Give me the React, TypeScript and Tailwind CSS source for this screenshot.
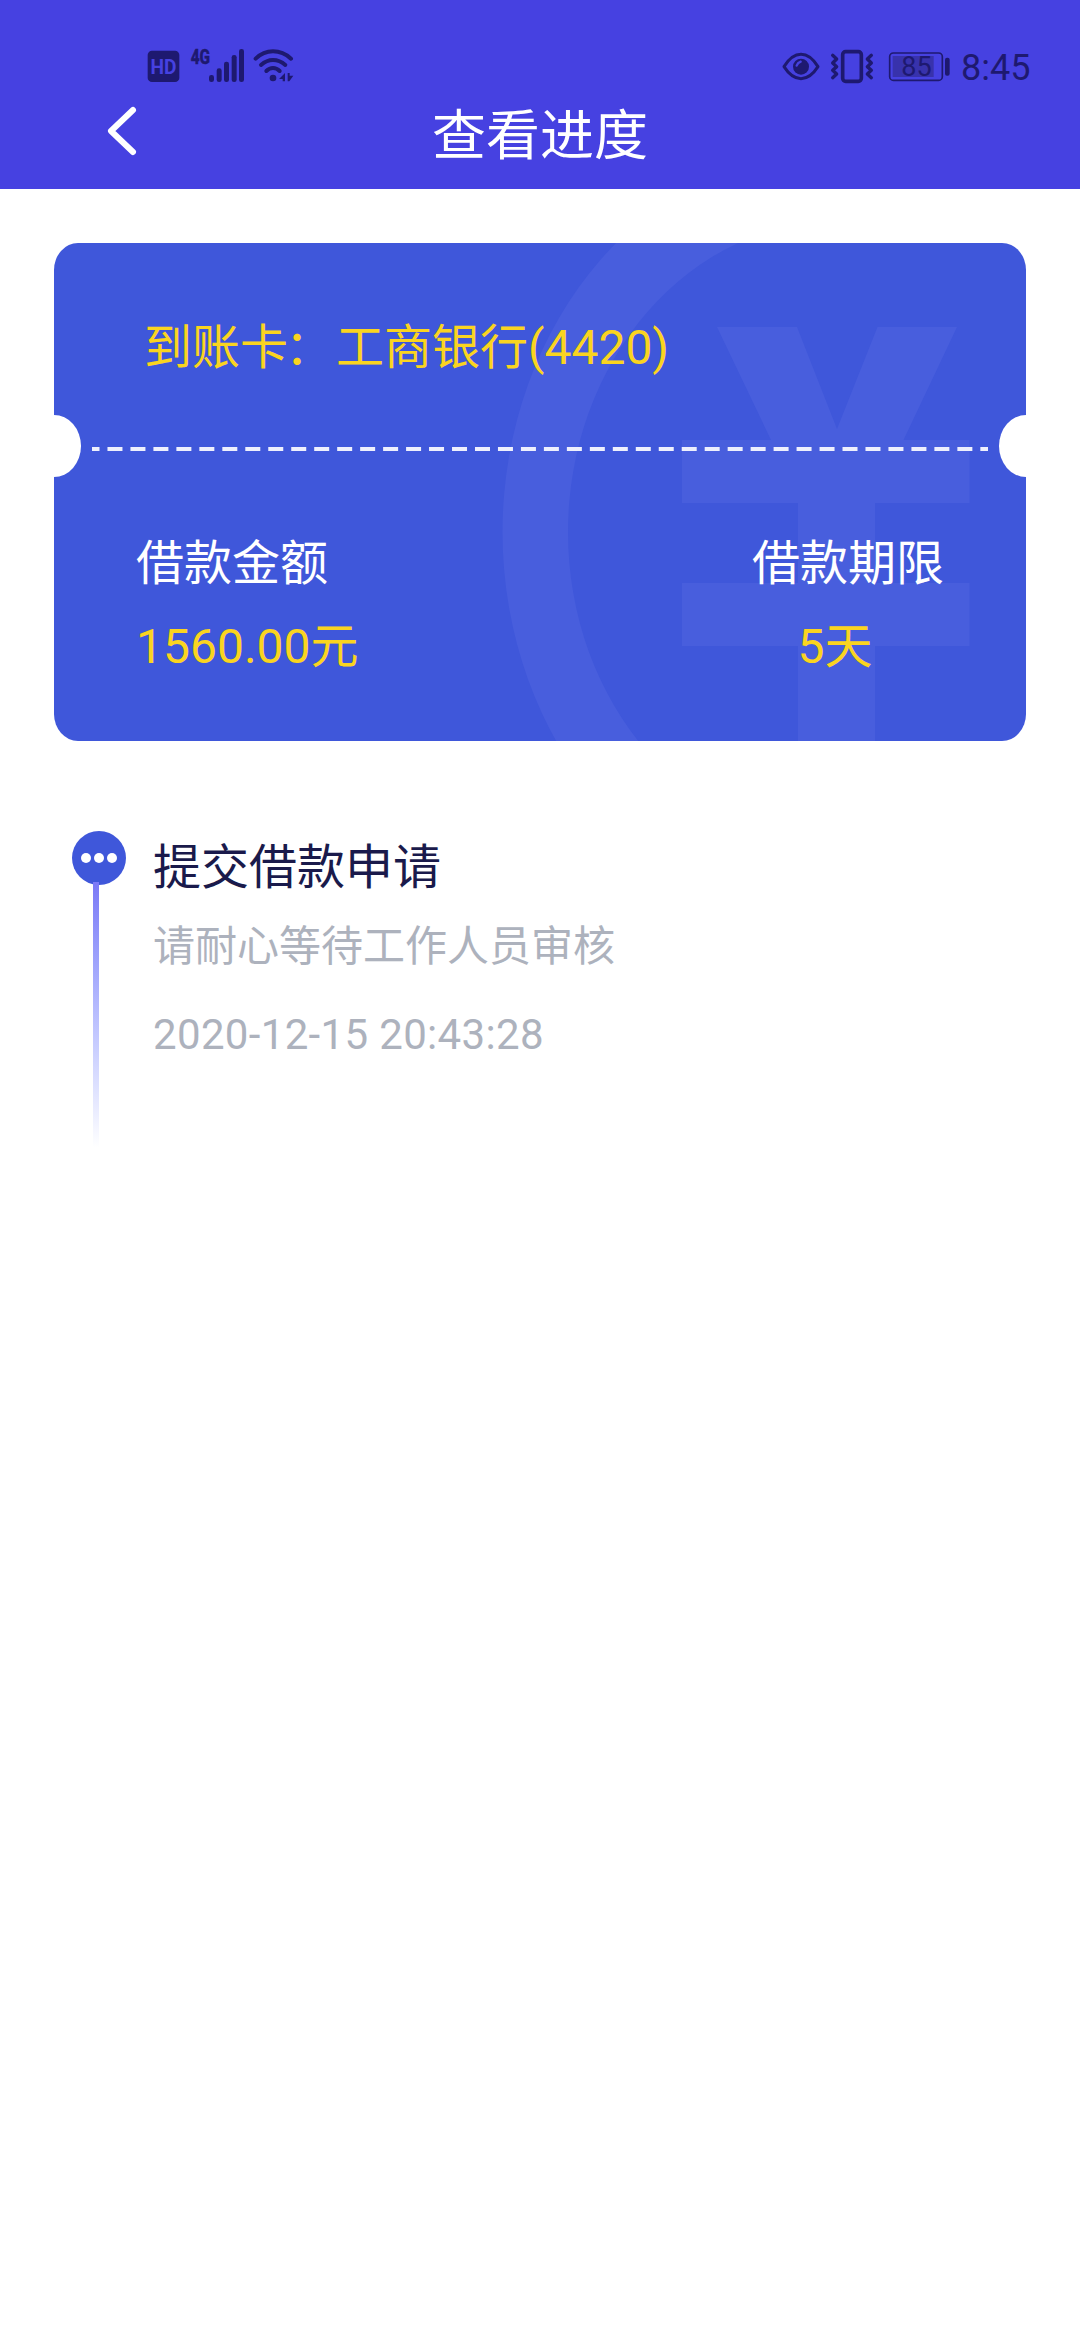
const loan = {
  bank: "工商银行(4420)",
  amount: "1560.00元",
  term: "5天",
};

const steps = [
  {
    title: "提交借款申请",
    desc: "请耐心等待工作人员审核",
    time: "2020-12-15 20:43:28",
  },
];

function SignalIcons() {
  return (
    <svg width="180" height="60" viewBox="0 0 540 180" fill="#1e1970">
      <rect x="53" y="47" width="95" height="94" rx="13" />
      <text x="100.5" y="116" textAnchor="middle" fontSize="58" fontWeight="700" fill="#4641e1" textLength="78" lengthAdjust="spacingAndGlyphs">HD</text>
      <text x="182" y="86" fontSize="61" fontWeight="800" textLength="58" lengthAdjust="spacingAndGlyphs" stroke="#1e1970" strokeWidth="1.5">4G</text>
      <rect x="237" y="120" width="15" height="21" rx="7" />
      <rect x="260" y="100" width="15" height="41" rx="7" />
      <rect x="282" y="80" width="15" height="61" rx="7" />
      <rect x="305" y="60" width="15" height="81" rx="7" />
      <rect x="327" y="42" width="15" height="99" rx="7" />
      <g fill="none" stroke="#1e1970" strokeWidth="12" strokeLinecap="round">
        <path d="M377 71Q400 49 429 49Q459 49 483 71" />
        <path d="M393 90Q410 75 429 75Q449 75 466 90" />
        <path d="M409 108Q418 99 429 99Q440 99 449 108" />
      </g>
      <circle cx="429" cy="129" r="10" />
      <path d="M465 114V139H458V132H447ZM473 114V139H478L490 122H479V114Z" />
    </svg>
  );
}

function DeviceIcons() {
  return (
    <svg width="185" height="60" viewBox="0 0 555 180" fill="#1e1970">
      <path d="M42 95Q65 58 93 58Q121 58 144 95Q121 131 93 131Q65 131 42 95Z" fill="none" stroke="#1e1970" strokeWidth="9" strokeLinejoin="round" />
      <circle cx="93" cy="95" r="24" />
      <path d="M80 92Q83 83 92 80" fill="none" stroke="#4641e1" strokeWidth="7" strokeLinecap="round" />
      <rect x="218" y="50" width="56" height="89" rx="9" fill="none" stroke="#1e1970" strokeWidth="11" />
      <g fill="none" stroke="#1e1970" strokeWidth="10" strokeLinecap="round" strokeLinejoin="round">
        <path d="M188 61L200 72L188 84L200 95L188 106L200 117L188 128" />
        <path d="M304 61L292 72L304 84L292 95L304 106L292 117L304 128" />
      </g>
      <rect x="359" y="54" width="158" height="82" rx="11" fill="none" stroke="#1e1970" strokeWidth="5" />
      <rect x="368" y="63" width="123" height="63" fill="#3832ac" />
      <text x="439.500" y="123" textAnchor="middle" fontSize="81">85</text>
      <rect x="525" y="68" width="14" height="54" rx="6" />
    </svg>
  );
}

function Header() {
  return (
    <header className="h-[189px] bg-[#4641e1]">
      <div className="flex h-[95px] items-end justify-between pl-[130px] pr-[50px]">
        <SignalIcons />
        <div className="flex h-[60px] items-center">
          <DeviceIcons />
          <span className="w-[75px] pl-1.5 pt-1.5 text-4xl text-[#1e1970]">8:45</span>
        </div>
      </div>
      <div className="grid h-[78px] grid-cols-3 items-start">
        <svg className="ml-[104px] mt-2" width="36" height="56" viewBox="0 0 36 56" fill="none" stroke="#fff" strokeWidth="6" strokeLinecap="round" strokeLinejoin="round">
          <path d="M29 7L7 28L29 49" />
        </svg>
        <h1 className="pt-[3px] text-center text-[54px] leading-[78px] text-white">查看进度</h1>
      </div>
    </header>
  );
}

// Ticket background: yen watermark, side notches and the tear line
function TicketShape() {
  return (
    <svg className="absolute inset-0" width="972" height="498" viewBox="0 0 972 498">
      <g fill="#485edd">
        <path d="M785.500 -97A337 386 0 0 0 785.500 675V600.500A271.500 311.500 0 0 1 785.500 -22.500Z" />
        <path d="M663 84H743L783 186L823.500 84H903L849.500 197H915.500V260H821V340H915.500V403H821V498H744V403H628V340H744V260H628V197H717Z" />
      </g>
      <ellipse cx="0" cy="203" rx="27" ry="31" fill="#fff" />
      <ellipse cx="972" cy="203" rx="27" ry="31" fill="#fff" />
      <path d="M38 206H934" stroke="#eef0fd" strokeWidth="4" strokeDasharray="15 7.970" strokeDashoffset="7.500" />
    </svg>
  );
}

function LoanCard() {
  return (
    <section className="relative mx-[54px] mt-[54px] h-[498px] overflow-hidden rounded-[24px/27px] bg-[#3f57da] text-5xl">
      <TicketShape />
      <div className="relative flex h-[206px] items-center pl-[90px] pt-1">
        <p className="leading-[60px] text-[#fad420]">
          到账卡<span className="-ml-[3px] mr-[3px]">：</span>
          {loan.bank}
        </p>
      </div>
      <div className="relative flex justify-between pl-[82px] pr-[82px] pt-[74px]">
        <div>
          <p className="leading-[82px] text-white">借款金额</p>
          <p className="pt-px leading-[82px] text-[#fad420]">{loan.amount}</p>
        </div>
        <div>
          <p className="leading-[82px] text-white">借款期限</p>
          <p className="pr-[26px] pt-px text-center leading-[82px] text-[#fad420]">{loan.term}</p>
        </div>
      </div>
    </section>
  );
}

function Timeline() {
  return (
    <ul className="pl-[72px] pt-[90px]">
      {steps.map((step) => (
        <li key={step.time} className="flex">
          <div className="w-[54px]">
            <div className="flex size-[54px] items-center justify-center gap-[3px] rounded-full bg-[#3f57da]">
              <span className="size-[10px] rounded-full bg-white" />
              <span className="size-[10px] rounded-full bg-white" />
              <span className="size-[10px] rounded-full bg-white" />
            </div>
            <div className="-mt-[3px] ml-[21px] h-[266px] w-[6px] bg-linear-to-b from-[#7b79f6] to-white" />
          </div>
          <div className="pl-[27px] pt-0.5">
            <h2 className="text-5xl leading-[70px] text-[#1a1a4b]">{step.title}</h2>
            <p className="mt-[14px] text-[42px] leading-[60px] text-[#adb2bd]">{step.desc}</p>
            <p className="mt-[28px] text-[42px] leading-[60px] tracking-[0.34px] text-[#adb2bd]">{step.time}</p>
          </div>
        </li>
      ))}
    </ul>
  );
}

export default function App() {
  return (
    <div className="min-h-screen w-[1080px] bg-white font-[Roboto,'Noto_Sans_CJK_SC',sans-serif]">
      <Header />
      <LoanCard />
      <Timeline />
    </div>
  );
}
